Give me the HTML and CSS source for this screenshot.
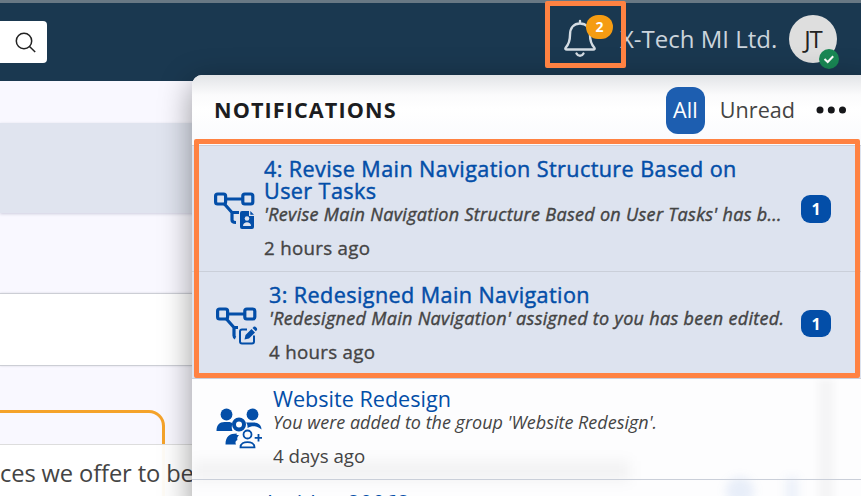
FILE: index.html
```html
<!DOCTYPE html>
<html lang="en">
<head>
<meta charset="utf-8">
<title>Notifications</title>
<link rel="stylesheet" href="styles.css">
</head>
<body>
<header class="topbar">
  <div class="search"><svg width="22" height="22" viewBox="0 0 22 22"><circle cx="9" cy="9" r="7.7"/><path d="M14.500 14.500l5.700 5.500"/></svg></div>
  <div class="account">
    <div class="bell">
      <svg width="34" height="38" viewBox="0 0 34 38"><path d="M17 2v2M7 16C7 8.500 11 4.500 17 4.500s10 4 10 11.500c0 7 1.500 9.500 4.200 12.500 1 1.300.3 2-1 2H3.800c-1.300 0-2-.7-1-2 2.700-3 4.200-5.500 4.200-12.500z"/><path d="M13.500 34.500c1.500 3 5.500 3 7 0"/></svg>
      <span class="count">2</span>
    </div>
    <span class="company">X-Tech MI Ltd.</span>
    <div class="avatar">JT<span class="status"><svg width="20" height="20" viewBox="0 0 20 20"><path d="M5.500 10l3.200 3 5.500-5.700"/></svg></span></div>
  </div>
</header>
<main class="page">
  <section class="banner"></section>
  <section class="panel"></section>
  <section class="card"></section>
  <div class="tip">ces we offer to be</div>
</main>
<aside class="popover">
  <div class="head">
    <h1>NOTIFICATIONS</h1>
    <button class="tab on">All</button>
    <button class="tab">Unread</button>
    <svg class="dots" width="32" height="8" viewBox="0 0 32 8"><circle cx="4" cy="4" r="3.500"/><circle cx="15.300" cy="4" r="3.500"/><circle cx="26.500" cy="4" r="3.500"/></svg>
  </div>
  <i class="ghost words"></i><i class="ghost tint"></i><i class="ghost dot-a"></i><i class="ghost dot-b"></i>
  <article class="item unread first">
    <svg class="icon" width="44" height="38" viewBox="0 0 44 38"><g class="line"><rect x="1.600" y="2" width="10" height="10" rx="2"/><rect x="28.800" y="2" width="10" height="10" rx="2"/><path d="M11.500 7H29M10 11.500l8 9v7.500c0 1.500 1 2.500 4 2.500M17 20.500h8"/></g><path class="fill" d="M28 19h7v5h5v11a2 2 0 0 1-2 2H28a2 2 0 0 1-2-2V21a2 2 0 0 1 2-2zM36.300 19l3.700 3.700h-3.700z"/><circle class="cut" cx="33" cy="26.500" r="2.300"/><path class="cut" d="M29 34c0-5 8-5 8 0z"/></svg>
    <div class="body"><h2>4: Revise Main Navigation Structure Based on<br>User Tasks</h2><p class="text">'Revise Main Navigation Structure Based on User Tasks' has b...</p><p class="time">2 hours ago</p></div>
    <span class="num">1</span>
  </article>
  <article class="item unread second">
    <svg class="icon" width="44" height="38" viewBox="0 0 44 38"><g class="line"><rect x="1.600" y="2" width="10" height="10" rx="2"/><rect x="28.800" y="2" width="10" height="10" rx="2"/><path d="M11.500 7H29M10 11.500l8 9v8c0 1.500.5 2 1.500 2.500M17 20.500h5"/></g><path class="thin" d="M31 22.500h-5a2 2 0 0 0-2 2v10a2 2 0 0 0 2 2h10a2 2 0 0 0 2-2v-6"/><path class="fill" d="M28.500 32.500l1-4.500 6-6 3.500 3.500-6 6zM36.500 21l1-1c1.500-1.500 4.500 1.500 3.500 3l-1.200 1.300z"/></svg>
    <div class="body"><h2>3: Redesigned Main Navigation</h2><p class="text">'Redesigned Main Navigation' assigned to you has been edited.</p><p class="time">4 hours ago</p></div>
    <span class="num">1</span>
  </article>
  <article class="item third">
    <svg class="icon" width="48" height="42" viewBox="0 0 48 42"><g class="fill"><circle cx="10.500" cy="6.500" r="5.900"/><circle cx="36.500" cy="6.500" r="5.900"/><path d="M.5 23c0-6 3-9 8-9h4c2 0 3 .5 4 1.500-1 2.500-1 5 0 7.500zM30 14.500h8c4.500 0 7.500 3 7.500 7-4-3.500-9-4.500-14-1.500.3-2-.2-4-1.500-5.500zM9.500 36.500c0-8 4-11 11.500-11-1 1.500-.5 1.500 2 1.500-2 2-2 4-1.500 5-2 .6-2.500 2.500-1.500 4.500z"/></g><circle class="head-ring" cx="23" cy="16.500" r="5"/><circle class="outline" cx="31.500" cy="26.500" r="4"/><path class="outline" d="M24.500 39.300c0-7 14-7 14 0zM42.500 26v7.500M38.700 29.800H46"/></svg>
    <div class="body"><h2>Website Redesign</h2><p class="text">You were added to the group 'Website Redesign'.</p><p class="time">4 days ago</p></div>
  </article>
  <article class="item fourth"><div class="body"><h2>Insider 20062</h2></div></article>
</aside>
<div class="mark mark-bell"></div>
<div class="mark mark-list"></div>
</body>
</html>
```

FILE: styles.css
```css
* { box-sizing: border-box; }
body { margin: 0; width: 861px; height: 496px; overflow: hidden; position: relative; font-family: "Open Sans", sans-serif; color: #444; background: #f9f8ff; }
h1, h2, p { margin: 0; }
svg { display: block; fill: none; }
.topbar { height: 81px; border-top: 3px solid #687884; background: #1a3850; display: flex; justify-content: space-between; }
.search { margin-top: 18px; width: 47px; height: 42px; background: #fff; border-radius: 0 4px 4px 0; padding: 11px 0 0 15px; }
.search svg { stroke: #222; stroke-width: 1.5; }
.account { display: flex; padding-right: 24px; }
.bell { position: relative; width: 57px; padding-top: 16px; }
.bell svg { stroke: #d4dce3; stroke-width: 2.400; stroke-linecap: round; }
.count { position: absolute; left: 23px; top: 12px; width: 27px; height: 24px; border-radius: 12px; background: #f59c12; color: #fff; font-weight: 700; font-size: 14px; line-height: 24px; text-align: center; }
.company { width: 169px; padding-top: 18px; font-size: 24px; line-height: 36px; color: #cbd4dc; white-space: nowrap; }
.avatar { position: relative; width: 48px; height: 48px; margin-top: 12px; border-radius: 50%; background: #dedede; color: #222; font-size: 24px; letter-spacing: -1px; line-height: 47px; text-align: center; }
.status { position: absolute; left: 30px; top: 34px; width: 20px; height: 20px; border-radius: 50%; background: #198754; }
.status svg { stroke: #fff; stroke-width: 2; }
.page { padding-top: 42px; }
.banner { height: 90px; background: #e0e4ef; box-shadow: 0 1px 3px #ccd; }
.panel { margin-top: 80px; height: 73px; background: #fff; border: solid #ccced5; border-width: 1px 0; box-shadow: 0 0 2px #d6d7df; }
.card { margin-top: 44px; width: 165px; height: 100px; border: 3px solid #f5a32a; border-left: 0; border-radius: 0 16px 0 0; }
.tip { position: relative; margin-top: -66px; height: 60px; padding: 10px 0 0 0; border-top: 1px solid #ddd; background: #fffffff5; font-size: 23.7px; line-height: 36px; letter-spacing: -.12px; white-space: nowrap; }
.popover { position: absolute; left: 192px; top: 75px; width: 680px; height: 440px; background: #fdfdfe; border-radius: 10px 10px 0 0; box-shadow: 0 8px 32px #0006; overflow: hidden; }
.head { height: 70px; width: 669px; display: flex; align-items: center; background: linear-gradient(#e2e4e7, #fbfbfc 20px, #fff 34px, #f9fafd); padding: 0 13px 0 22px; }
h1 { flex: 1; color: #1c1d21; font-size: 21.6px; line-height: 30px; font-weight: 700; letter-spacing: 1.100px; }
.tab { border: 0; padding: 0; background: none; color: #444; font: 21.6px/30px "Open Sans", sans-serif; }
.tab.on { width: 39px; height: 47px; background: #1d5eb0; color: #fff; border-radius: 12px; margin-right: 15px; padding-bottom: 1px; }
.dots { margin-left: 21px; fill: #16171a; }
.item { position: relative; display: flex; width: 669px; border-top: 1px solid #cacfd9; }
.unread { background: #dde3ef; font-weight: 500; }
.first { height: 126px; padding: 12px 0 0 22px; }
.second { height: 107px; padding: 12px 0 0 24px; }
.third { height: 101px; padding: 9px 0 0 24px; }
.fourth { height: 50px; padding: 12px 0 0 75px; }
.icon { flex: none; }
.first .icon { margin-top: 34px; }
.second .icon { margin-top: 23px; }
.third .icon { margin-top: 20px; }
.body { width: 530px; white-space: nowrap; }
.first .body { margin-left: 6px; }
.second .body { margin-left: 9px; }
.third .body { margin-left: 9px; }
h2 { color: #034ea8; font-size: 21.6px; line-height: 22px; font-weight: 400; }
.fourth h2 { letter-spacing: .1px; word-spacing: 5px; }
.text { font-size: 18px; line-height: 24px; font-style: italic; }
.time { margin-top: 10px; font-size: 18.7px; line-height: 24px; }
.unread h2 { letter-spacing: .4px; -webkit-text-stroke: .45px #034ea8; }
.unread .text { letter-spacing: .31px; -webkit-text-stroke: .4px #444; }
.unread .time { letter-spacing: .3px; -webkit-text-stroke: .35px #444; }
.num { position: absolute; left: 609px; width: 30px; height: 28px; border-radius: 9px; background: #034ea8; color: #fff; font-size: 16px; line-height: 28px; font-weight: 700; text-align: center; }
.first .num { top: 49px; }
.second .num { top: 38px; height: 27px; }
.line { stroke: #034ea8; stroke-width: 3.200; }
.fill { fill: #034ea8; }
.cut { fill: #dde3ef; }
.thin, .outline { stroke: #034ea8; stroke-width: 2; }
.outline { stroke-width: 1.800; }
.head-ring { stroke: #034ea8; stroke-width: 4; }
.ghost { position: absolute; pointer-events: none; }
.words { left: 0; top: 386px; width: 438px; height: 20px; background: #0000000b; filter: blur(7px); }
.dot-a { left: 534px; top: 402px; width: 28px; height: 28px; border-radius: 50%; background: #3c78d01c; filter: blur(5px); }
.dot-b { left: 594px; top: 402px; width: 12px; height: 28px; background: #3c78d016; filter: blur(5px); }
.tint { left: 626px; top: 304px; width: 16px; height: 140px; background: #00000008; filter: blur(3px); }
.mark { position: absolute; border: 5px solid #ff8242; border-radius: 2px; }
.mark-bell { left: 545px; top: 1px; width: 81px; height: 67px; }
.mark-list { left: 194px; top: 139px; width: 666px; height: 239px; }
```
